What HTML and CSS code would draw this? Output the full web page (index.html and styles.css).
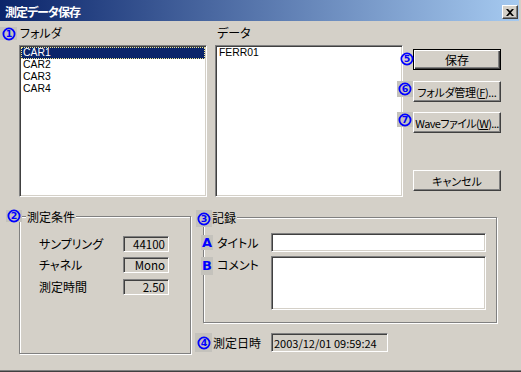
FILE: index.html
```html
<!DOCTYPE html>
<html lang="ja">
<head>
<meta charset="utf-8">
<link rel="stylesheet" href="styles.css">
</head>
<body>
<div class="window">
  <div class="titlebar">
    <span class="title">測定データ保存</span>
    <span class="close"><svg width="8" height="7" viewBox="0 0 8 7"><path d="M0 0h2l2 2 2-2h2L5 3.5 8 7H6L4 5 2 7H0l3-3.5z" fill="#000"/></svg></span>
  </div>
  <div class="client">
    <div class="top">
      <div class="col">
        <div class="lbl">フォルダ</div>
        <div class="listbox">
          <div class="item sel">CAR1</div>
          <div class="item">CAR2</div>
          <div class="item">CAR3</div>
          <div class="item">CAR4</div>
        </div>
      </div>
      <div class="col data">
        <div class="lbl">データ</div>
        <div class="listbox">
          <div class="item">FERR01</div>
        </div>
      </div>
      <div class="buttons">
        <div class="btn default b-save">保存</div>
        <div class="btn b-folder">フォルダ管理(<u>F</u>)...</div>
        <div class="btn b-wave">Waveファイル(<u>W</u>)...</div>
        <div class="btn b-cancel">キャンセル</div>
      </div>
    </div>
    <div class="bottom">
      <div class="group cond">
        <div class="glabel">測定条件</div>
        <div class="crow first"><span class="clbl">サンプリング</span><span class="ro num">44100</span></div>
        <div class="crow"><span class="clbl">チャネル</span><span class="ro num">Mono</span></div>
        <div class="crow last"><span class="clbl">測定時間</span><span class="ro num">2.50</span></div>
      </div>
      <div class="rightcol">
        <div class="group rec">
          <div class="glabel">記録</div>
          <div class="rrow first"><span class="rlbl">タイトル</span><span class="edit title-in"></span></div>
          <div class="rrow comment"><span class="rlbl">コメント</span><span class="edit comment-in"></span></div>
        </div>
        <div class="daterow"><span class="dlbl">測定日時</span><span class="ro date">2003/12/01 09:59:24</span></div>
      </div>
    </div>
  </div>

  <span class="mark m1"><svg class="circ" width="14" height="14" viewBox="0 0 14 14"><circle cx="7" cy="7" r="5.6" fill="none" stroke="#0000ff" stroke-width="1.8"/><text x="7" y="10.4" text-anchor="middle">1</text></svg></span>
  <span class="mark m2"><svg class="circ" width="14" height="14" viewBox="0 0 14 14"><circle cx="7" cy="7" r="5.6" fill="none" stroke="#0000ff" stroke-width="1.8"/><text x="7" y="10.4" text-anchor="middle">2</text></svg></span>
  <span class="mark m3"><svg class="circ" width="14" height="14" viewBox="0 0 14 14"><circle cx="7" cy="7" r="5.6" fill="none" stroke="#0000ff" stroke-width="1.8"/><text x="7" y="10.4" text-anchor="middle">3</text></svg></span>
  <span class="mark m4"><svg class="circ" width="14" height="14" viewBox="0 0 14 14"><circle cx="7" cy="7" r="5.6" fill="none" stroke="#0000ff" stroke-width="1.8"/><text x="7" y="10.4" text-anchor="middle">4</text></svg></span>
  <span class="mark m5 nobg"><svg class="circ" width="14" height="14" viewBox="0 0 14 14"><circle cx="7" cy="7" r="5.6" fill="none" stroke="#0000ff" stroke-width="1.8"/><text x="7" y="10.4" text-anchor="middle">5</text></svg></span>
  <span class="mark m6"><svg class="circ" width="14" height="14" viewBox="0 0 14 14"><circle cx="7" cy="7" r="5.6" fill="none" stroke="#0000ff" stroke-width="1.8"/><text x="7" y="10.4" text-anchor="middle">6</text></svg></span>
  <span class="mark m7"><svg class="circ" width="14" height="14" viewBox="0 0 14 14"><circle cx="7" cy="7" r="5.6" fill="none" stroke="#0000ff" stroke-width="1.8"/><text x="7" y="10.4" text-anchor="middle">7</text></svg></span>
  <span class="mark letter ma">A</span>
  <span class="mark letter mb">B</span>
</div>
</body>
</html>
```

FILE: styles.css
```css
* { box-sizing: border-box; margin: 0; padding: 0; }
html, body { width: 521px; height: 372px; overflow: hidden; }
body {
  background: #d4d0c8;
  font-family: "Noto Sans CJK JP", "DejaVu Sans", sans-serif;
  font-size: 12px;
  line-height: 12px;
  color: #000;
  font-feature-settings: "palt";
}
.window {
  position: relative;
  width: 521px;
  height: 372px;
  background: #d4d0c8;
  border-bottom: 1px solid #404040;
  box-shadow: inset 0 -1px 0 #808080;
}
.titlebar {
  display: flex;
  align-items: flex-start;
  height: 21px;
  margin-right: 2px;
  background: linear-gradient(to right, #0a246a, #a6caf0);
  color: #fff;
}
.title { padding: 6px 0 0 5px; font-weight: bold; letter-spacing: -1px; }
.close {
  margin: 5px 1px 0 auto;
  width: 16px;
  height: 14px;
  background: #d4d0c8;
  border: 1px solid;
  border-color: #fff #404040 #404040 #fff;
  box-shadow: inset -1px -1px 0 #808080;
  display: flex;
  align-items: center;
  justify-content: center;
}
.client { padding-left: 19px; }
.top { display: flex; }
.col { width: 188px; }
.col.data { margin-left: 8px; }
.lbl { height: 24px; padding: 6px 0 0 1px; }
.col.data .lbl { padding-left: 2px; }
.listbox {
  height: 152px;
  background: #fff;
  border: 1px solid;
  border-color: #808080 #fff #fff #808080;
  box-shadow: inset 1px 1px 0 #404040, inset -1px -1px 0 #d4d0c8;
  padding: 1px;
}
.item {
  height: 12px;
  line-height: 12px;
  padding-left: 2px;
  font-family: "Liberation Sans", sans-serif;
  font-size: 10.4px;
}
.item.sel {
  background: #0a246a;
  color: #fff;
  outline: 1px dotted #f0e890;
  outline-offset: -1px;
}
.buttons { margin-left: 10px; width: 88px; display: flex; flex-direction: column; }
.btn {
  display: flex;
  align-items: center;
  justify-content: center;
  width: 88px;
  height: 21px;
  background: #d4d0c8;
  border: 1px solid;
  border-color: #fff #404040 #404040 #fff;
  box-shadow: inset -1px -1px 0 #808080;
  font-size: 11px;
  white-space: nowrap;
}
.btn.default {
  border: 1px solid #000;
  box-shadow: inset 1px 1px 0 #fff, inset -1px -1px 0 #404040, inset -2px -2px 0 #808080;
  font-size: 12px;
}
.b-save { margin-top: 28px; }
.b-folder { margin-top: 11px; letter-spacing: -0.3px; }
.b-wave { margin-top: 10px; letter-spacing: -0.6px; }
.b-cancel { margin-top: 37px; }

.bottom { display: flex; }
.group {
  border: 1px solid #808080;
  box-shadow: inset 1px 1px 0 #fff, 1px 1px 0 #fff;
}
.glabel {
  background: #d4d0c8;
  width: fit-content;
  height: 12px;
  padding: 0 1px;
  margin: -6px 0 0 6px;
}
.cond { margin-top: 19px; width: 172px; height: 138px; }
.crow { display: flex; align-items: center; height: 16px; padding-left: 19px; margin-top: 5px; }
.crow.first { margin-top: 13px; }
.crow.last { margin-top: 6px; }
.clbl { width: 84px; }
.ro {
  background: #d4d0c8;
  border: 1px solid;
  border-color: #808080 #fff #fff #808080;
  box-shadow: inset 1px 1px 0 #404040, inset -1px -1px 0 #d4d0c8;
  display: flex;
  align-items: center;
}
.num { width: 46px; height: 16px; justify-content: flex-end; padding-right: 3px; font-size: 11.5px; }
.rightcol { margin-left: 12px; }
.rec { margin-top: 20px; width: 294px; height: 106px; }
.rec .glabel { margin-left: 7px; }
.rrow { display: flex; align-items: center; padding-left: 13px; }
.rrow.first { margin-top: 9px; }
.rrow.comment { margin-top: 4px; align-items: flex-start; }
.rrow.comment .rlbl { padding-top: 3px; }
.rlbl { width: 54px; }
.edit {
  display: block;
  background: #fff;
  border: 1px solid;
  border-color: #808080 #fff #fff #808080;
  box-shadow: inset 1px 1px 0 #404040, inset -1px -1px 0 #d4d0c8;
}
.title-in { width: 215px; height: 19px; }
.comment-in { width: 215px; height: 54px; }
.daterow { display: flex; align-items: center; margin-top: 10px; padding-left: 10px; }
.dlbl { width: 58px; }
.date { width: 117px; height: 19px; padding-left: 2px; font-size: 11px; }

.mark {
  position: absolute;
  display: flex;
  align-items: center;
  justify-content: center;
  background: #c4c2bc;
  color: #0000ff;
}
.mark.nobg { background: transparent; }
.circ { display: block; }
.circ text {
  font-family: "DejaVu Sans", sans-serif;
  font-weight: bold;
  font-size: 9.5px;
  fill: #0000ff;
}
.m1 { left: 0; top: 27px; width: 17px; height: 13px; }
.m2 { left: 6px; top: 210px; width: 16px; height: 12px; }
.m3 { left: 196px; top: 210px; width: 16px; height: 17px; }
.m4 { left: 195px; top: 333px; width: 17px; height: 19px; }
.m5 { left: 399px; top: 52px; width: 15px; height: 14px; }
.m6 { left: 397px; top: 81px; width: 16px; height: 16px; }
.m7 { left: 397px; top: 112px; width: 16px; height: 15px; }
.letter {
  font-family: "DejaVu Sans", sans-serif;
  font-weight: bold;
  font-size: 13px;
  width: 12px;
}
.ma { left: 201px; top: 235px; height: 15px; }
.mb { left: 201px; top: 257px; height: 18px; }
```
